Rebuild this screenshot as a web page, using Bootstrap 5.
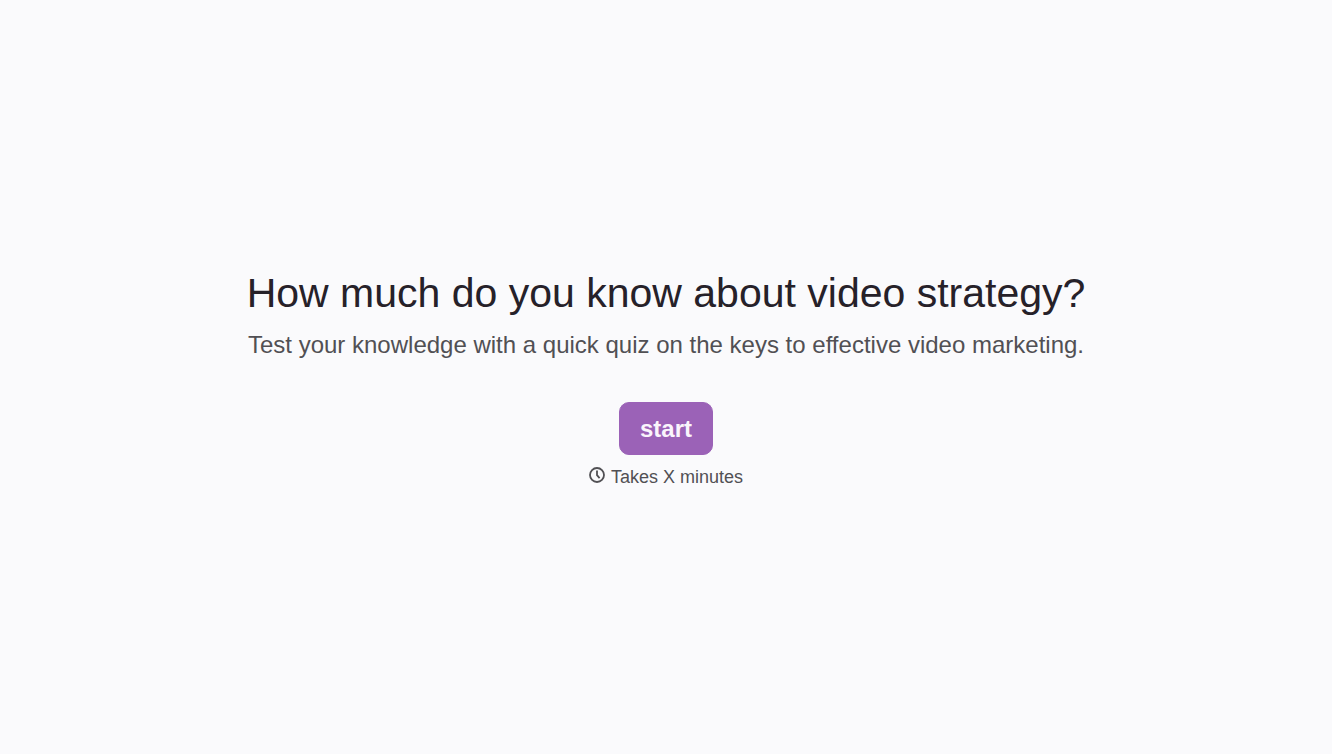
<!DOCTYPE html>
<html lang="en">
<head>
<meta charset="utf-8">
<meta name="viewport" content="width=device-width, initial-scale=1">
<title>Video strategy quiz</title>
<link href="https://cdn.jsdelivr.net/npm/bootstrap@5.3.0/dist/css/bootstrap.min.css" rel="stylesheet">
<style>
  body { background: #fafafc; color: #262627; font-family: "Liberation Sans", Arial, sans-serif; }
  .quiz-start { padding-top: 6px; }
  .quiz-title { font-size: 41px; line-height: 48px; margin-bottom: 12px; color: #262129; }
  .quiz-intro { font-size: 24px; line-height: 32px; margin-bottom: 41px; color: #515054; }
  .btn-start { --bs-btn-bg: #9b62b7; --bs-btn-border-color: #9b62b7; --bs-btn-color: #faf5fc; --bs-btn-hover-bg: #8950a6; --bs-btn-hover-border-color: #8950a6; --bs-btn-hover-color: #fff; --bs-btn-border-radius: 10px; padding: 10px 20px 9px; font-size: 24px; line-height: 32px; }
  .quiz-time { font-size: 18px; line-height: 28px; color: #515054; }
</style>
</head>
<body>
<main class="quiz-start container-fluid min-vh-100 d-flex flex-column align-items-center justify-content-center text-center">
  <h1 class="quiz-title fw-normal">How much do you know about video strategy?</h1>
  <p class="quiz-intro">Test your knowledge with a quick quiz on the keys to effective video marketing.</p>
  <button type="button" class="btn btn-start fw-bold">start</button>
  <p class="quiz-time d-flex align-items-center mt-2 mb-0">
    <svg class="me-1 mb-1" width="18" height="18" viewBox="0 0 18 18" fill="none" stroke="currentColor" aria-hidden="true"><circle cx="8" cy="9" r="7" stroke-width="1.8"/><path d="M8 4.6v4.6l2.6 3" stroke-width="1.8"/></svg>
    Takes X minutes
  </p>
</main>
<script src="https://cdn.jsdelivr.net/npm/bootstrap@5.3.0/dist/js/bootstrap.bundle.min.js"></script>
</body>
</html>
